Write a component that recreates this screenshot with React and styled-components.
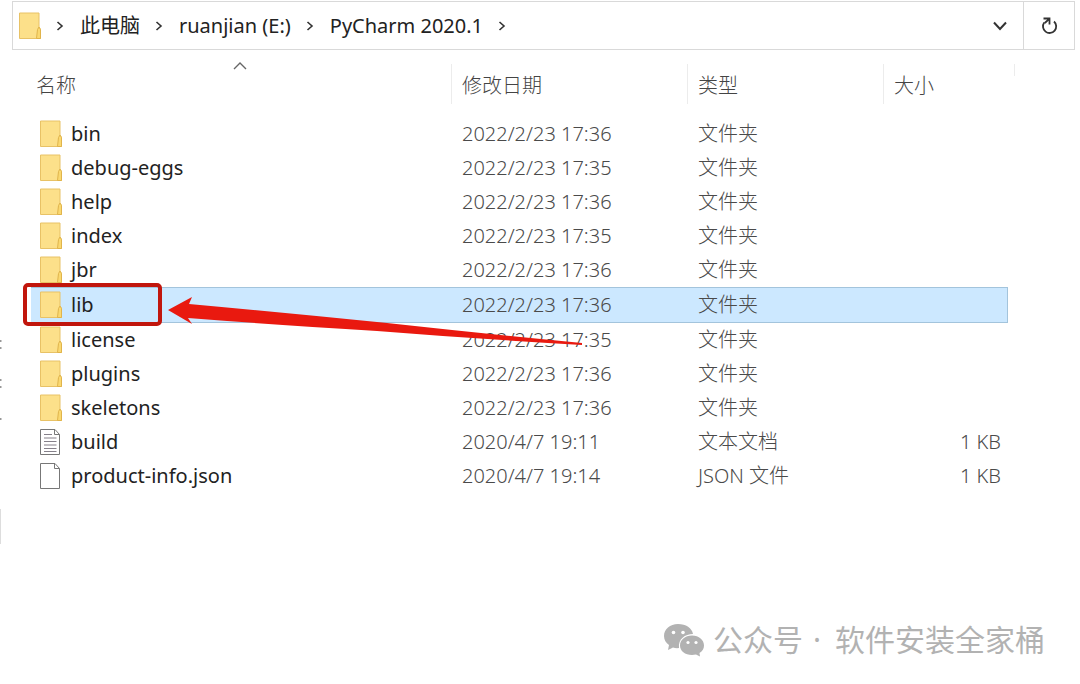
import React, { useState } from "react";
import styled, { createGlobalStyle } from "styled-components";

const GlobalStyle = createGlobalStyle`
  * {
    box-sizing: border-box;
  }

  body {
    margin: 0;
    background: #ffffff;
    color: #222222;
    font-family: "Noto Sans", "Noto Sans CJK SC", sans-serif;
    font-size: 20px;
  }
`;

const Window = styled.div`
  position: relative;
  display: flex;
  flex-direction: column;
  min-height: 100vh;
  padding: 1px 5px 0 12px;
  overflow: hidden;
`;

const AddressBar = styled.header`
  display: flex;
  height: 49px;
  border: 1px solid #d9d9d9;
`;

const Breadcrumbs = styled.nav`
  display: flex;
  flex: 1;
  align-items: center;
  padding-left: 6px;
`;

const Crumb = styled.a`
  color: #222222;
  line-height: 28px;
  text-decoration: none;
  white-space: nowrap;
`;

const CrumbArrow = styled.svg`
  width: 8px;
  height: 10px;
  margin: 0 16px 0 15px;
  flex-shrink: 0;
`;

const BarButton = styled.button`
  display: flex;
  align-items: center;
  justify-content: center;
  width: ${(props) => (props.$divided ? "51px" : "46px")};
  padding: 0;
  border: none;
  border-left: ${(props) => (props.$divided ? "1px solid #d9d9d9" : "none")};
  background: transparent;
  cursor: pointer;
`;

const FileArea = styled.main`
  flex: 1;
  padding: 14px 67px 0 19px;
`;

const FileTable = styled.table`
  width: 100%;
  border-collapse: separate;
  border-spacing: 0;
  table-layout: fixed;
`;

const Column = styled.col`
  width: ${(props) => props.$width || "auto"};
`;

const HeadCell = styled.th`
  position: relative;
  height: 40px;
  padding: 0 0 0 ${(props) => (props.$first ? "5px" : "10px")};
  border-left: ${(props) => (props.$first ? "none" : "1px solid #ececec")};
  color: #444444;
  font-weight: 300;
  text-align: left;
`;

const LastDivider = styled.span`
  position: absolute;
  top: 0;
  right: -7px;
  width: 1px;
  height: 12px;
  background: #ececec;
`;

const SortArrow = styled.svg`
  position: absolute;
  top: -3px;
  left: 50%;
  width: 14px;
  height: 9px;
  margin-left: -8px;
`;

const Spacer = styled.tbody`
  td {
    height: 13px;
    padding: 0;
  }
`;

const Cell = styled.td`
  position: relative;
  height: 34px;
  padding: 0 7px 0 11px;
  color: #4a4a4a;
  font-weight: 300;
  line-height: 34px;
  text-align: ${(props) => (props.$right ? "right" : "left")};
  white-space: nowrap;
`;

const NameCell = styled(Cell)`
  padding-left: 9px;
  color: #222222;
  font-weight: 400;
`;

const Row = styled.tr`
  ${(props) =>
    props.$selected &&
    `
    td {
      height: 36px;
      background: #cce8ff;
      border-top: 1px solid #a3c4dc;
      border-bottom: 1px solid #a3c4dc;
    }
    td:last-child {
      border-right: 1px solid #a3c4dc;
    }
  `}
`;

const NameWrap = styled.div`
  display: flex;
  align-items: center;
  gap: 9px;
`;

const Icon = styled.svg`
  width: 22px;
  height: 28px;
  flex-shrink: 0;
`;

const Highlight = styled.div`
  position: absolute;
  z-index: 1;
  top: -5px;
  left: -8px;
  width: 139px;
  height: 43px;
  border: 4px solid #c1160d;
  border-radius: 5px;
`;

const Pointer = styled.svg`
  position: absolute;
  z-index: 1;
  top: 8px;
  left: 136px;
  width: 418px;
  height: 54px;
  pointer-events: none;
`;

const PaneEdge = styled.svg`
  position: absolute;
  top: 336px;
  left: 0;
  width: 4px;
  height: 210px;
`;

const Watermark = styled.footer`
  display: flex;
  align-items: center;
  justify-content: flex-end;
  padding: 0 30px 22px 0;
  color: #b2b2b2;
  font-size: 30px;
  line-height: 44px;
`;

const Account = styled.span`
  padding: 0 10px 0 8px;
`;

const AccountName = styled.span`
  padding-left: 14px;
`;

const WechatIcon = styled.svg`
  width: 42px;
  height: 34px;
`;

const files = [
  { name: "bin", date: "2022/2/23 17:36", type: "文件夹", icon: "folder" },
  { name: "debug-eggs", date: "2022/2/23 17:35", type: "文件夹", icon: "folder" },
  { name: "help", date: "2022/2/23 17:36", type: "文件夹", icon: "folder" },
  { name: "index", date: "2022/2/23 17:35", type: "文件夹", icon: "folder" },
  { name: "jbr", date: "2022/2/23 17:36", type: "文件夹", icon: "folder" },
  { name: "lib", date: "2022/2/23 17:36", type: "文件夹", icon: "folder" },
  { name: "license", date: "2022/2/23 17:35", type: "文件夹", icon: "folder" },
  { name: "plugins", date: "2022/2/23 17:36", type: "文件夹", icon: "folder" },
  { name: "skeletons", date: "2022/2/23 17:36", type: "文件夹", icon: "folder" },
  { name: "build", date: "2020/4/7 19:11", type: "文本文档", size: "1 KB", icon: "text" },
  { name: "product-info.json", date: "2020/4/7 19:14", type: "JSON 文件", size: "1 KB", icon: "file" },
];

const crumbs = ["此电脑", "ruanjian (E:)", "PyCharm 2020.1"];

const FolderIcon = () => (
  <Icon viewBox="0 0 22 28" aria-hidden="true">
    <path d="M0.500 1H20V15L21.500 17.500V26.500H0.500Z" fill="#fce08a" stroke="#e8c266" />
    <path d="M17.500 26.500L18.500 17.500L20 15L21.500 17.500V26.500Z" fill="#fad870" stroke="#e0b44c" />
  </Icon>
);

const FileIcon = ({ lined }) => (
  <Icon viewBox="0 0 22 28" aria-hidden="true">
    <path d="M0.500 1.500H15L19.500 6.500V26.500H0.500Z" fill="#ffffff" stroke="#777777" />
    <path d="M14.500 1.500V6.500H19.500" fill="none" stroke="#777777" />
    {lined && (
      <path
        d="M4 6.500H12M4 10H16.500M4 13.500H16.500M4 17H16.500M4 20.500H16.500M4 23.500H16.500"
        stroke="#85808a"
        strokeWidth="1.2"
      />
    )}
  </Icon>
);

const RightArrow = () => (
  <CrumbArrow viewBox="0 0 8 10" aria-hidden="true">
    <path d="M1.5 1L6 5L1.5 9" fill="none" stroke="#333333" strokeWidth="1.6" />
  </CrumbArrow>
);

const FileRow = ({ file, selected, onSelect }) => (
  <Row $selected={selected} onClick={onSelect}>
    <NameCell>
      <NameWrap>
        {file.icon === "folder" ? <FolderIcon /> : <FileIcon lined={file.icon === "text"} />}
        {file.name}
      </NameWrap>
      {file.name === "lib" && (
        <>
          <Highlight />
          <Pointer viewBox="0 0 418 54" aria-hidden="true">
            <path
              d="M1 14L25 1L22 8Q120 17 220 27Q320 38 415 47V49Q310 43 210 35Q110 29 21 22L25 28Z"
              fill="#e9190f"
            />
          </Pointer>
        </>
      )}
    </NameCell>
    <Cell>{file.date}</Cell>
    <Cell>{file.type}</Cell>
    <Cell $right>{file.size}</Cell>
  </Row>
);

const App = () => {
  const [selected, setSelected] = useState("lib");

  return (
    <>
      <GlobalStyle />
      <Window>
        <AddressBar>
          <Breadcrumbs>
            <FolderIcon />
            <RightArrow />
            {crumbs.map((crumb) => (
              <React.Fragment key={crumb}>
                <Crumb href="#">{crumb}</Crumb>
                <RightArrow />
              </React.Fragment>
            ))}
          </Breadcrumbs>
          <BarButton aria-label="History">
            <svg width="16" height="10" viewBox="0 0 16 10">
              <path d="M2 1.5L8 8L14 1.5" fill="none" stroke="#333333" strokeWidth="2" />
            </svg>
          </BarButton>
          <BarButton $divided aria-label="Refresh">
            <svg width="18" height="20" viewBox="0 0 18 20">
              <path
                d="M14 5.500A6.600 6.600 0 1 1 4.200 6.600M3.500 2.500H9.500V8.500M9.200 2.800L4.800 7"
                fill="none"
                stroke="#333333"
                strokeWidth="1.8"
              />
            </svg>
          </BarButton>
        </AddressBar>

        <FileArea>
          <FileTable>
            <colgroup>
              <Column />
              <Column $width="236px" />
              <Column $width="196px" />
              <Column $width="125px" />
            </colgroup>
            <thead>
              <tr>
                <HeadCell $first>
                  名称
                  <SortArrow viewBox="0 0 14 9" aria-hidden="true">
                    <path d="M1 8L7 2L13 8" fill="none" stroke="#666666" strokeWidth="1.4" />
                  </SortArrow>
                </HeadCell>
                <HeadCell>修改日期</HeadCell>
                <HeadCell>类型</HeadCell>
                <HeadCell>
                  大小
                  <LastDivider />
                </HeadCell>
              </tr>
            </thead>
            <Spacer>
              <tr>
                <td colSpan={4} />
              </tr>
            </Spacer>
            <tbody>
              {files.map((file) => (
                <FileRow
                  key={file.name}
                  file={file}
                  selected={selected === file.name}
                  onSelect={() => setSelected(file.name)}
                />
              ))}
            </tbody>
          </FileTable>
        </FileArea>

        <PaneEdge viewBox="0 0 4 210" aria-hidden="true">
          <path d="M0 5H1.5M0 12H1.5M0 44H1.5M0 51H1.5M0 83H1.5" stroke="#777777" strokeWidth="1.5" />
          <path d="M0.5 173V208" stroke="#dddddd" />
        </PaneEdge>

        <Watermark>
          <WechatIcon viewBox="0 0 42 34" aria-hidden="true">
            <path
              d="M15 1C7 1 1 6.300 1 13C1 17 3 20 6 22L5 27L10 24.500Q13 25.500 16 25C15 16 22 11 30 11C29 5 23 1 15 1Z"
              fill="#b2b2b2"
            />
            <path
              d="M29 12.500C22 12.500 17 17 17 22.500C17 28 22 32 29 32L33 31.500L37 33.500L36.500 30C39.500 28 41 25.500 41 22.500C41 17 36 12.500 29 12.500Z"
              fill="#b2b2b2"
            />
            <circle cx="10.500" cy="9.500" r="1.800" fill="#ffffff" />
            <circle cx="20" cy="9.500" r="1.800" fill="#ffffff" />
            <circle cx="25" cy="19.500" r="1.600" fill="#ffffff" />
            <circle cx="33" cy="19.500" r="1.600" fill="#ffffff" />
          </WechatIcon>
          <Account>公众号</Account>
          <span>·</span>
          <AccountName>软件安装全家桶</AccountName>
        </Watermark>
      </Window>
    </>
  );
};

export default App;
